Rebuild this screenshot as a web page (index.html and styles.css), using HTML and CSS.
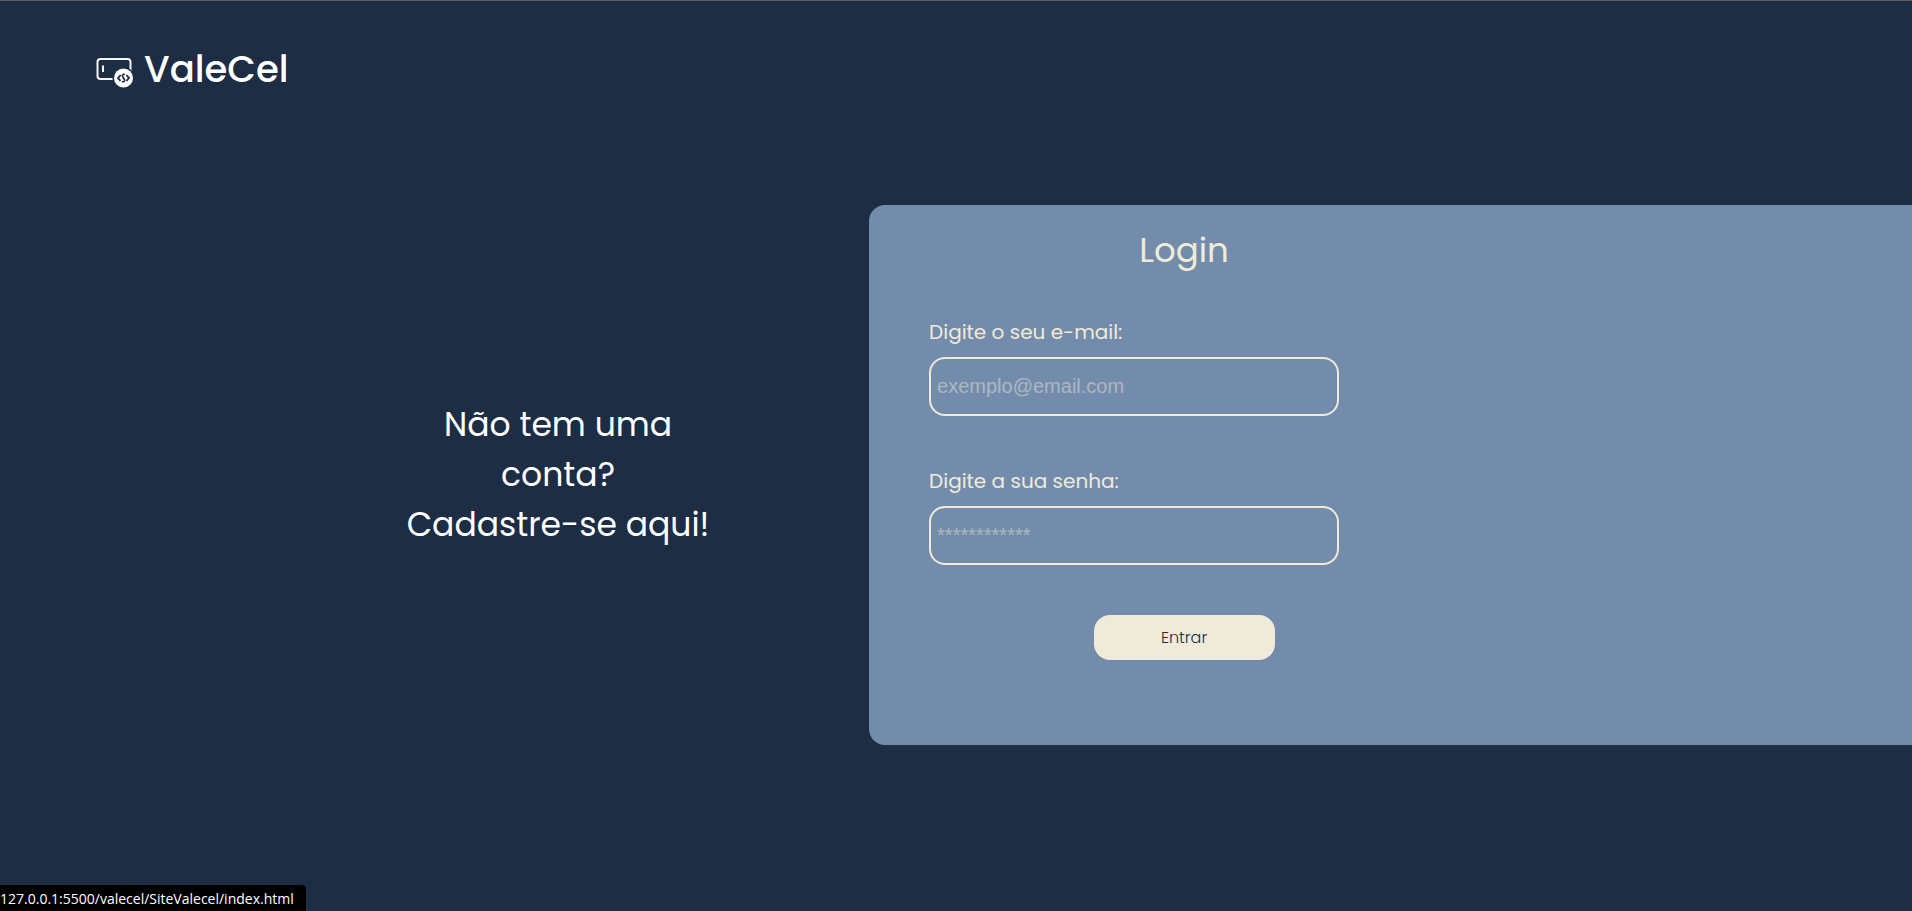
FILE: index.html
```html
<!DOCTYPE html>
<html lang="pt-BR">
<head>
  <meta charset="utf-8">
  <meta name="viewport" content="width=device-width, initial-scale=1">
  <title>ValeCel</title>
  <link rel="stylesheet" href="styles.css">
</head>
<body>
  <header class="header">
    <a class="logo" href="index.html">
      <svg class="logo-icon" viewBox="0 0 38 32" aria-hidden="true">
        <rect x="1.500" y="2" width="33" height="20" rx="3" fill="none" stroke="#f4f4f6" stroke-width="2"/>
        <path d="M7 8.500v6.500" stroke="#fff" stroke-width="2"/>
        <circle cx="27.500" cy="21" r="11" fill="#1d2d44"/>
        <circle cx="27.500" cy="21" r="9.500" fill="#fff"/>
        <path d="M24.600 18L22 21.200l2.600 2.600M30.400 18.200L33 20.800 30.400 24" fill="none" stroke="#1d2d44" stroke-width="1.800"/>
        <path d="M29 17.500c-2.200-.8-3.200.8-2.400 2l1.800 3c.8 1.400-.6 2.800-2.600 2" fill="none" stroke="#1d2d44" stroke-width="1.700"/>
      </svg>
      <span>ValeCel</span>
    </a>
  </header>
  <main class="main">
    <section class="signup">
      <a class="signup-link" href="cadastro.html">Não tem uma<br>conta?<br>Cadastre-se aqui!</a>
    </section>
    <section class="card">
      <form class="form">
        <h1 class="title">Login</h1>
        <div class="field">
          <label for="email">Digite o seu e-mail:</label>
          <input id="email" type="email" placeholder="exemplo@email.com">
        </div>
        <div class="field">
          <label for="senha">Digite a sua senha:</label>
          <input id="senha" type="password" placeholder="************">
        </div>
        <button class="submit" type="submit">Entrar</button>
      </form>
    </section>
  </main>
  <div class="status">127.0.0.1:5500/valecel/SiteValecel/index.html</div>
</body>
</html>
```
FILE: styles.css
```css
* {
  box-sizing: border-box;
  margin: 0;
  padding: 0;
}

body {
  min-height: 100vh;
  background: #1d2d44;
  border-top: 1px solid #5d5d5b;
  color: #fff;
  font-family: Poppins, Inter, sans-serif;
}

.header {
  padding: 40px 96px 108px;
}

.logo {
  display: inline-flex;
  align-items: center;
  gap: 10px;
  color: #fff;
  font-size: 37px;
  font-weight: 500;
  line-height: 56px;
  text-decoration: none;
}

.logo-icon {
  width: 38px;
  height: 32px;
  margin-top: 8px;
}

.main {
  display: grid;
  grid-template-columns: 5fr 6fr;
}

.signup {
  display: flex;
  align-items: center;
  justify-content: center;
  padding-left: 247px;
}

.signup-link {
  color: #fff;
  font-size: 33px;
  line-height: 50px;
  text-align: center;
  text-decoration: none;
  white-space: nowrap;
}

.card {
  padding: 20px 60px 85px;
  border-radius: 16px 0 0 16px;
  background: #748cab;
  color: #f0ebd8;
}

.form {
  display: flex;
  flex-direction: column;
  max-width: 510px;
}

.title {
  margin-bottom: 42px;
  font-size: 34px;
  font-weight: 400;
  line-height: 50px;
  text-align: center;
}

.field {
  display: flex;
  flex-direction: column;
  gap: 10px;
  width: 410px;
  max-width: 100%;
  margin-bottom: 50px;
  font-size: 20px;
  line-height: 30px;
}

.field input {
  height: 59px;
  padding: 0 6px;
  border: 2px solid #f0ebd8;
  border-radius: 16px;
  background: transparent;
  color: #f0ebd8;
  font-family: "Liberation Sans", Arial, sans-serif;
  font-size: 20px;
}

.field input::placeholder {
  color: #f0ebd8;
  opacity: 0.45;
}

.submit {
  align-self: center;
  width: 181px;
  height: 45px;
  border: 0;
  border-radius: 16px;
  background: #f0ebd8;
  color: #1d2d44;
  font-family: Poppins, Inter, sans-serif;
  font-size: 16px;
  font-weight: 300;
}

.status {
  position: fixed;
  bottom: 0;
  left: 0;
  padding: 1px 12px 0 0;
  border-top-right-radius: 4px;
  background: #000;
  color: #fff;
  font-family: "Segoe UI", "Open Sans", sans-serif;
  font-size: 14px;
  line-height: 25px;
}
```
